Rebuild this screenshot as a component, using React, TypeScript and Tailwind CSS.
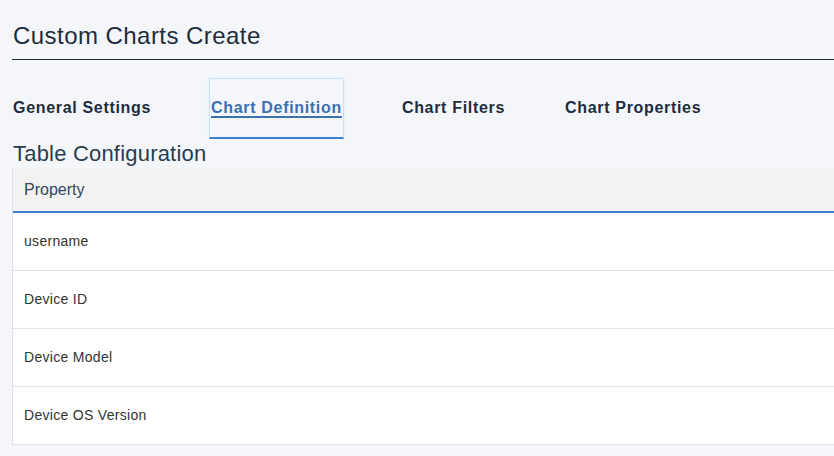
import React from "react";

const tabs = ["General Settings", "Chart Definition", "Chart Filters", "Chart Properties"];
const rows = ["username", "Device ID", "Device Model", "Device OS Version"];

export default function App() {
  return (
    <div
      className="min-h-screen w-full overflow-hidden bg-[#f5f6fa] pl-3"
      style={{ fontFamily: '"Liberation Sans", Arial, sans-serif' }}
    >
      <h1 className="border-b border-[#1d2d3e] pb-[9px] pl-[1px] pt-[22px] text-[24px] font-normal leading-[28px] tracking-[0.45px] text-[#1d2d3e]">
        Custom Charts Create
      </h1>
      <div className="-ml-[1px] mt-[18px] flex gap-[56px]">
        {tabs.map((t, i) => {
          const active = i === 1;
          return (
            <div
              key={t}
              className={
                active
                  ? "border border-b-2 border-[#c7e3fb] border-b-[#3f7fcf] px-[1px] pb-[20px] pt-[20px] shadow-[0_0_2px_#d6ecfd]"
                  : "border border-b-2 border-transparent px-[1px] pb-[20px] pt-[20px]"
              }
            >
              <span
                className={
                  active
                    ? "block text-[16px] font-bold leading-[18px] tracking-[0.68px] text-[#3b70b7] underline decoration-2 underline-offset-[3px]"
                    : "block text-[16px] font-bold leading-[18px] tracking-[0.68px] text-[#1d2d3e]"
                }
              >
                {t}
              </span>
            </div>
          );
        })}
      </div>
      <h2 className="mb-[2px] mt-[3px] pl-[1px] text-[22px] font-normal leading-[24px] tracking-[0.2px] text-[#2b3c4e]">
        Table Configuration
      </h2>
      <div className="-mr-[40px] border-l border-[#dde2e7] bg-white">
        <div className="flex h-[45px] items-center border-b-2 border-[#3f7fcf] bg-[#f2f2f2] pl-[11px] text-[16px] text-[#32475c]">
          Property
        </div>
        {rows.map((r) => (
          <div
            key={r}
            className="flex h-[58px] items-center border-b border-[#e0e3e7] pl-[11px] text-[14px] tracking-[0.3px] text-[#333333]"
          >
            {r}
          </div>
        ))}
      </div>
    </div>
  );
}
